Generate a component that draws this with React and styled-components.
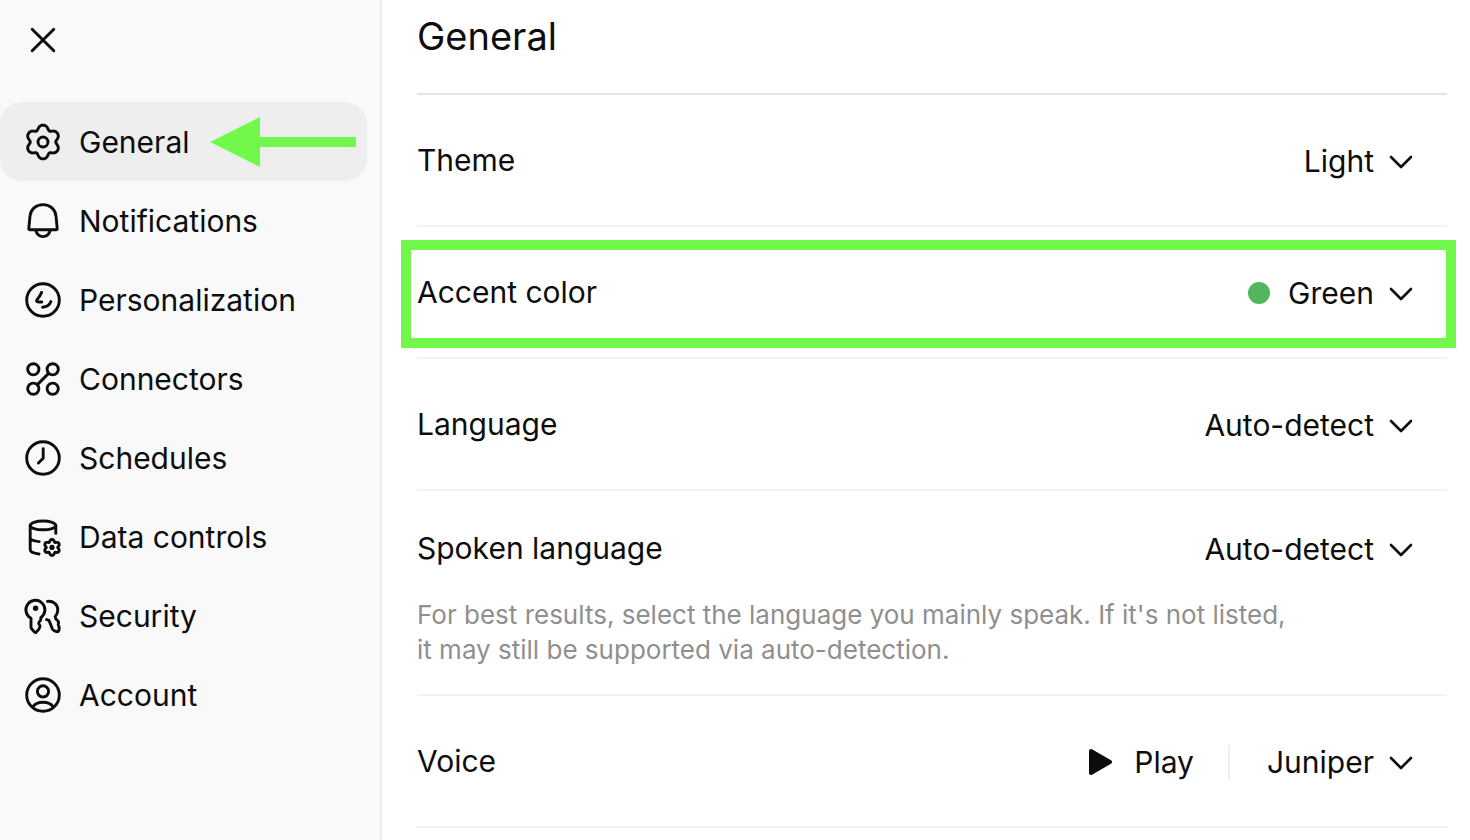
import { useState } from 'react';
import styled, { createGlobalStyle } from 'styled-components';

const GlobalStyle = createGlobalStyle`
  * {
    box-sizing: border-box;
  }
  body {
    margin: 0;
    background: #fff;
    color: #0d0d0d;
    font-family: Inter, 'Liberation Sans', sans-serif;
    font-size: 30px;
    line-height: 36px;
  }
  button, select {
    margin: 0;
    padding: 0;
    border: 0;
    background: none;
    color: inherit;
    font: inherit;
    cursor: pointer;
  }
`;

// Layout
const Page = styled.div`
  display: flex;
  height: 100vh;
  overflow: hidden;
`;

const Sidebar = styled.aside`
  flex: none;
  width: 382px;
  padding: 22px 13px 0 0;
  background: #f9f9f9;
  border-right: 2px solid #ececec;
`;

const Content = styled.main`
  flex: 1;
  min-width: 0;
  padding: 0 23px 0 35px;
`;

// Sidebar
const CloseButton = styled.button`
  display: block;
  margin: 0 0 44px 25px;
  height: 36px;
`;

const NavItem = styled.button`
  display: flex;
  align-items: center;
  gap: 18px;
  width: 100%;
  height: 79px;
  padding: 0 11px 0 25px;
  border-radius: 22px;
  background: ${({ $active }) => ($active ? '#eee' : 'transparent')};
`;

const Icon = styled.svg`
  display: block;
  flex: none;
  width: 36px;
  height: 36px;
  fill: none;
  stroke: currentColor;
  stroke-width: 2.9;
  stroke-linecap: round;
  stroke-linejoin: round;
  overflow: visible;
`;

const Arrow = styled.svg`
  flex: none;
  width: 146px;
  height: 51px;
  margin-left: auto;
  fill: #72f84b;
`;

// Settings rows
const Header = styled.header`
  height: 95px;
  padding-top: 12px;
  border-bottom: 2px solid #e3e3e3;
`;

const Title = styled.h1`
  margin: 0;
  font-size: 38px;
  line-height: 48px;
  font-weight: 400;
`;

const Row = styled.section`
  position: relative;
  padding: ${({ $tall }) => ($tall ? '34px 0 27px' : '42px 0 40px')};
  border-bottom: 2px solid #f2f2f2;
`;

const RowLine = styled.div`
  display: flex;
  align-items: center;
  justify-content: space-between;
  height: 48px;
`;

const Label = styled.label`
  padding-bottom: 2px;
`;

const Controls = styled.div`
  display: flex;
  align-items: center;
`;

const Hint = styled.p`
  max-width: 888px;
  margin: 24px 0 0;
  color: #8f8f8f;
  font-size: 26px;
  line-height: 35px;
`;

const SelectBox = styled.div`
  position: relative;
  display: flex;
  align-items: center;
`;

const Select = styled.select`
  appearance: none;
  field-sizing: content;
  height: 48px;
  padding-right: 73px;
`;

const Chevron = styled.svg`
  position: absolute;
  right: 34px;
  width: 24px;
  height: 16px;
  fill: none;
  stroke: currentColor;
  stroke-width: 2.6;
  stroke-linecap: round;
  stroke-linejoin: round;
  pointer-events: none;
`;

const Dot = styled.span`
  width: 22px;
  height: 22px;
  margin-right: 18px;
  border-radius: 50%;
  background: #53b55d;
`;

const PlayButton = styled.button`
  display: flex;
  align-items: center;
  gap: 22px;
`;

const PlayIcon = styled.svg`
  width: 23px;
  height: 28px;
  fill: currentColor;
  stroke: currentColor;
  stroke-width: 4;
  stroke-linejoin: round;
`;

const Divider = styled.span`
  width: 2px;
  height: 35px;
  margin: 0 37px 0 34px;
  background: #f0f0f0;
`;

const Highlight = styled.div`
  position: absolute;
  inset: 13px -9px 9px -16px;
  border: 10px solid #72f84b;
  pointer-events: none;
`;

// Six-lobed gear outline, the second harmonic widens the lobes
function gearPath(cx, cy, radius, depth) {
  const points = [];
  for (let deg = 0; deg < 360; deg += 4) {
    const t = (deg * Math.PI) / 180;
    const r = radius + depth * (Math.cos(6 * t) - 0.15 * Math.cos(12 * t));
    points.push(`${(cx + r * Math.sin(t)).toFixed(2)} ${(cy - r * Math.cos(t)).toFixed(2)}`);
  }
  return `M${points.join('L')}Z`;
}

const icons = {
  general: (
    <>
      <path d={gearPath(18, 18, 15.1, 2.1)} />
      <circle cx="18" cy="18" r="5" />
    </>
  ),
  notifications: (
    <>
      <path d="M18 1.6C10.8 1.6 5.6 6.4 5 13.2L3.8 25.4C3.7 26.3 4.1 26.8 5 26.8H31C31.9 26.8 32.3 26.3 32.2 25.4L31 13.2C30.4 6.4 25.2 1.6 18 1.6Z" />
      <path d="M10.8 27.4C11.8 31.3 14.4 33.6 18 33.6S24.2 31.3 25.2 27.4" />
    </>
  ),
  personalization: (
    <>
      <circle cx="18" cy="18" r="16.3" />
      <path d="M16.6 10.4C15.4 13.4 13.8 15.8 11.9 17.9C11.4 18.6 11.6 19.6 12.6 19.8C14 20 15.4 20.1 16.8 20" />
      <path d="M17.6 25.3C21.6 25.1 24.6 23 25.9 19.6" />
    </>
  ),
  connectors: (
    <>
      <circle cx="8.3" cy="8.3" r="5.6" />
      <circle cx="27.7" cy="8.3" r="5.6" />
      <circle cx="8.3" cy="27.7" r="5.6" />
      <circle cx="27.7" cy="27.7" r="5.6" />
      <path d="M12.4 23.6L23.6 12.4" />
    </>
  ),
  schedules: (
    <>
      <circle cx="18" cy="18" r="16.3" />
      <path d="M18.2 8.8V18.2L13.4 23" />
    </>
  ),
  data: (
    <>
      <ellipse cx="18" cy="6.4" rx="12.8" ry="4.4" />
      <path d="M5.2 6.4V30.6C5.2 33 9 34.5 14 35M5.2 18.6C5.2 21 9 22.2 14.2 22.6M30.8 6.4V14.4" />
      <path d={gearPath(27, 28.4, 7, 1.1)} />
      <circle cx="27" cy="28.4" r="2.6" fill="currentColor" stroke="none" />
    </>
  ),
  security: (
    <>
      <path d="M6 20.2A9.5 9.5 0 1 1 15.8 19.6V21.4C15.8 22.6 13.7 23.8 13.7 25.2C13.7 26.4 15.3 27 15 28.6C14.6 30.8 12.8 33 11.2 34.2C10.6 34.6 10 34.5 9.5 34C8 32.4 6 30.6 6 29.2Z" />
      <circle cx="10.6" cy="10.2" r="2.7" fill="currentColor" stroke="none" />
      <path d="M22.4 3.4C28.3 2.6 32.8 6.7 32.8 11.9C32.8 14.7 31.8 16.7 30.2 18.6L30.8 20.8C31.2 22 33.4 22.6 33.6 24.2C33.7 25.4 32.8 26 33.4 27.2C34.8 29.4 34.2 31.6 33.6 33C33.3 33.7 32.8 33.9 32 33.7C30 33.2 28 32.4 27.4 31L24 22.4L21.6 21.6" />
    </>
  ),
  account: (
    <>
      <circle cx="18" cy="18" r="16.3" />
      <circle cx="18" cy="14.4" r="5.6" />
      <path d="M7.8 30C9.6 27 13.4 25.2 18 25.2S26.4 27 28.2 30" />
    </>
  ),
};

const navItems = [
  ['general', 'General'],
  ['notifications', 'Notifications'],
  ['personalization', 'Personalization'],
  ['connectors', 'Connectors'],
  ['schedules', 'Schedules'],
  ['data', 'Data controls'],
  ['security', 'Security'],
  ['account', 'Account'],
];

function Dropdown({ id, options }) {
  return (
    <SelectBox>
      <Select id={id}>
        {options.map((option) => (
          <option key={option}>{option}</option>
        ))}
      </Select>
      <Chevron viewBox="0 0 24 16" aria-hidden="true">
        <path d="M2 4L12 14L22 4" />
      </Chevron>
    </SelectBox>
  );
}

function Setting({ id, label, options, before, hint, highlighted }) {
  return (
    <Row $tall={Boolean(hint)}>
      <RowLine>
        <Label htmlFor={id}>{label}</Label>
        <Controls>
          {before}
          <Dropdown id={id} options={options} />
        </Controls>
      </RowLine>
      {hint && <Hint>{hint}</Hint>}
      {highlighted && <Highlight />}
    </Row>
  );
}

export default function App() {
  const [active, setActive] = useState('general');

  return (
    <Page>
      <GlobalStyle />
      <Sidebar>
        <CloseButton aria-label="Close">
          <Icon viewBox="0 0 36 36">
            <path d="M7.2 7.2L28.8 28.8M28.8 7.2L7.2 28.8" />
          </Icon>
        </CloseButton>
        <nav>
          {navItems.map(([key, label]) => (
            <NavItem key={key} $active={key === active} onClick={() => setActive(key)}>
              <Icon viewBox="0 0 36 36" aria-hidden="true">{icons[key]}</Icon>
              {label}
              {key === 'general' && (
                <Arrow viewBox="0 0 146 51" aria-hidden="true">
                  <path d="M0 26L50 1V21H146V31H50V51Z" />
                </Arrow>
              )}
            </NavItem>
          ))}
        </nav>
      </Sidebar>
      <Content>
        <Header>
          <Title>General</Title>
        </Header>
        <Setting id="theme" label="Theme" options={['Light']} />
        <Setting id="accent" label="Accent color" options={['Green']} before={<Dot />} highlighted />
        <Setting id="language" label="Language" options={['Auto-detect']} />
        <Setting
          id="spoken"
          label="Spoken language"
          options={['Auto-detect']}
          hint="For best results, select the language you mainly speak. If it's not listed, it may still be supported via auto-detection."
        />
        <Setting
          id="voice"
          label="Voice"
          options={['Juniper']}
          before={
            <>
              <PlayButton>
                <PlayIcon viewBox="0 0 23 28" aria-hidden="true">
                  <path d="M2 3L21 14L2 25Z" />
                </PlayIcon>
                Play
              </PlayButton>
              <Divider />
            </>
          }
        />
      </Content>
    </Page>
  );
}
